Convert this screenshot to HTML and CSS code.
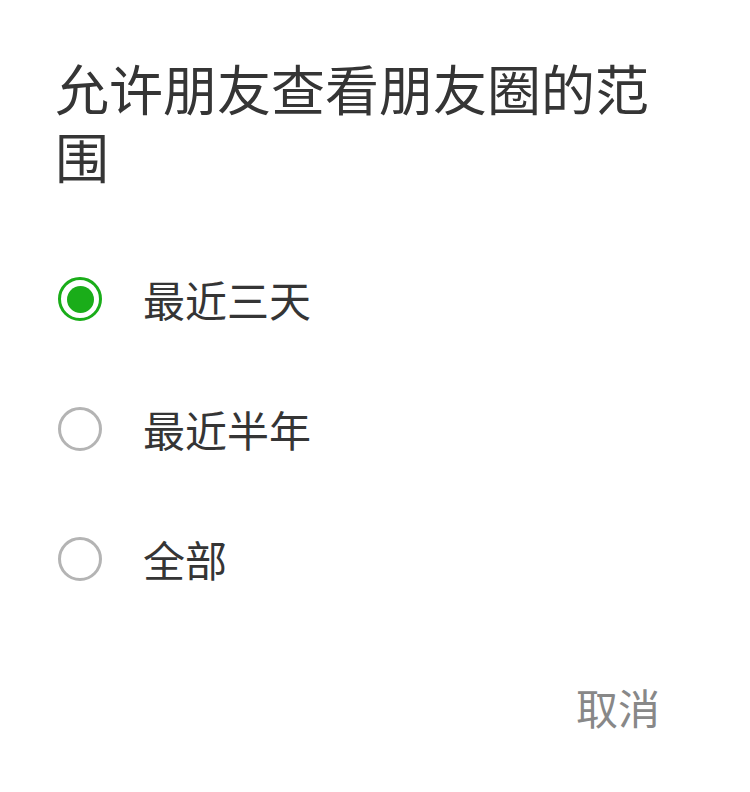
FILE: index.html
```html
<!DOCTYPE html>
<html lang="zh">
<head>
<meta charset="utf-8">
<link rel="stylesheet" href="styles.css">
</head>
<body>
<div class="dialog">
  <h1 class="title">允许朋友查看朋友圈的范围</h1>
  <div class="options">
    <div class="option">
      <span class="radio checked"><span class="dot"></span></span>
      <span class="label">最近三天</span>
    </div>
    <div class="option">
      <span class="radio"></span>
      <span class="label">最近半年</span>
    </div>
    <div class="option">
      <span class="radio"></span>
      <span class="label">全部</span>
    </div>
  </div>
  <div class="footer">
    <span class="cancel">取消</span>
  </div>
</div>
</body>
</html>
```
FILE: styles.css
```css
html, body {
  margin: 0;
  padding: 0;
  background: #ffffff;
}
body {
  font-family: "Noto Sans CJK SC", "Noto Sans", sans-serif;
  color: #353535;
}
.dialog {
  padding: 54px 55px 0 55px;
}
.title {
  margin: 0;
  font-size: 54px;
  line-height: 68px;
  font-weight: 400;
  color: #353535;
}
.options {
  margin-top: 44px;
  display: flex;
  flex-direction: column;
}
.option {
  height: 130px;
  display: flex;
  align-items: center;
  padding-left: 3px;
}
.radio {
  width: 44px;
  height: 44px;
  box-sizing: border-box;
  border: 3px solid #b4b4b4;
  border-radius: 50%;
  display: flex;
  align-items: center;
  justify-content: center;
  flex: none;
}
.radio.checked {
  border-color: #1aad19;
}
.dot {
  width: 27px;
  height: 27px;
  border-radius: 50%;
  background: #1aad19;
}
.label {
  margin-left: 41px;
  font-size: 42px;
  line-height: 60px;
  color: #353535;
}
.footer {
  margin-top: 53px;
  display: flex;
  justify-content: flex-end;
  padding-right: 35px;
}
.cancel {
  font-size: 42px;
  line-height: 60px;
  color: #888888;
}
```
